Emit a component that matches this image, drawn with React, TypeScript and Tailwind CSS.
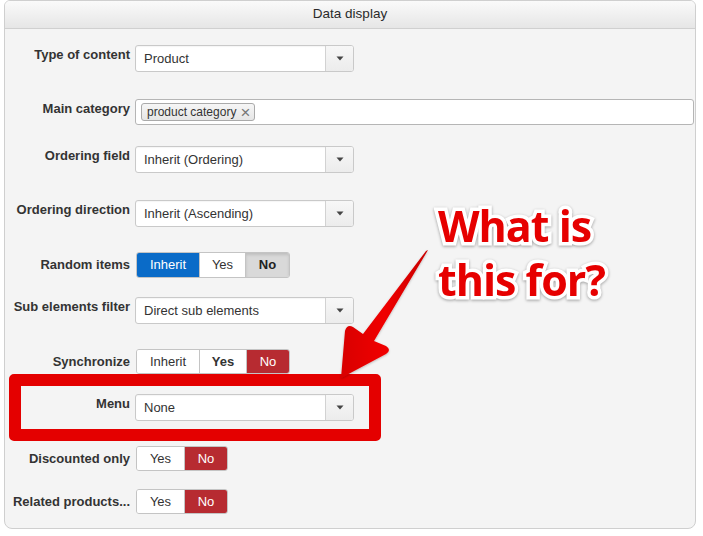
import React from "react";

const font = "font-['Liberation_Sans',Arial,sans-serif]";

function Caret() {
  return (
    <svg width="8" height="5" viewBox="0 0 8 5" className="block">
      <path d="M0.5 0.5 L7.5 0.5 L4 4.5 Z" fill="#444" />
    </svg>
  );
}

function Select({ value }: { value: string }) {
  return (
    <div className="flex h-[27px] w-[219px] rounded-[3px] border border-[#c9c9c9] bg-white overflow-hidden shadow-[inset_0_1px_1px_rgba(0,0,0,0.04)]">
      <div className="flex-1 flex items-center pl-[8px] text-[13px] text-[#333]">{value}</div>
      <div className="w-[28px] flex items-center justify-center border-l border-[#d2d2d2] bg-gradient-to-b from-[#f7f7f7] to-[#ececec]">
        <Caret />
      </div>
    </div>
  );
}

type Btn = { t: string; w: string; kind: "white" | "blue" | "red" | "gray"; bold?: boolean };

function Group({ btns, h }: { btns: Btn[]; h: string }) {
  return (
    <div className={`flex ${h} rounded-[3px] border border-[#c4c4c4] overflow-hidden ml-[1px]`}>
      {btns.map((b, i) => {
        const cls =
          b.kind === "blue"
            ? "bg-[#0a6bc8] text-white"
            : b.kind === "red"
            ? "bg-[#b72b31] text-white"
            : b.kind === "gray"
            ? "bg-[#d9d9d9] text-[#222] shadow-[inset_0_2px_3px_rgba(0,0,0,0.12)]"
            : "bg-white text-[#333]";
        return (
          <div
            key={i}
            className={`${b.w} ${cls} ${b.bold ? "font-bold" : ""} ${i > 0 ? "border-l border-[#c4c4c4]" : ""} flex items-center justify-center text-[13px]`}
          >
            {b.t}
          </div>
        );
      })}
    </div>
  );
}

function Row({ label, mt, children, center }: { label: string; mt: string; children: React.ReactNode; center?: boolean }) {
  return (
    <div className={`flex ${center ? "items-center" : "items-start"} ${mt}`}>
      <div className={`w-[125px] text-right text-[13px] leading-[18px] font-bold text-[#333] whitespace-nowrap ${center ? "" : "pt-[1px]"}`}>{label}</div>
      <div className="ml-[5px]">{children}</div>
    </div>
  );
}

export default function App() {
  return (
    <div className={`${font} relative w-[703px] h-[536px] bg-white overflow-hidden`}>
      <div className="ml-[4px] w-[692px] h-[529px] rounded-b-[8px] rounded-t-[6px] border border-[#cfcfcf] bg-[#f4f4f4] overflow-hidden">
        <div className="h-[28px] border-b border-[#d0d0d0] bg-gradient-to-b from-[#fafafa] to-[#e6e6e6] flex items-center justify-center text-[13.5px] text-[#2a2a2a]">
          Data display
        </div>
        <div className="pt-[16px]">
          <Row label="Type of content" mt="">
            <Select value="Product" />
          </Row>
          <Row label="Main category" mt="mt-[27px]">
            <div className="h-[26px] w-[559px] rounded-[3px] border border-[#b5b5b5] bg-white flex items-center pl-[5px]">
              <div className="h-[18px] flex items-center rounded-[3px] border border-[#aaa] bg-gradient-to-b from-[#f6f6f6] to-[#e6e6e6] pl-[5px] pr-[4px] text-[12px] text-[#333]">
                product category
                <span className="ml-[4px] text-[#777] text-[17px] leading-none">×</span>
              </div>
            </div>
          </Row>
          <Row label="Ordering field" mt="mt-[21px]">
            <Select value="Inherit (Ordering)" />
          </Row>
          <Row label="Ordering direction" mt="mt-[27px]">
            <Select value="Inherit (Ascending)" />
          </Row>
          <Row label="Random items" mt="mt-[25px]" center>
            <Group
              h="h-[26px]"
              btns={[
                { t: "Inherit", w: "w-[62px]", kind: "blue" },
                { t: "Yes", w: "w-[46px]", kind: "white" },
                { t: "No", w: "w-[44px]", kind: "gray", bold: true },
              ]}
            />
          </Row>
          <Row label="Sub elements filter" mt="mt-[19px]">
            <Select value="Direct sub elements" />
          </Row>
          <Row label="Synchronize" mt="mt-[25px]" center>
            <Group
              h="h-[25px]"
              btns={[
                { t: "Inherit", w: "w-[62px]", kind: "white" },
                { t: "Yes", w: "w-[47px]", kind: "white", bold: true },
                { t: "No", w: "w-[43px]", kind: "red" },
              ]}
            />
          </Row>
          <Row label="Menu" mt="mt-[20px]">
            <Select value="None" />
          </Row>
          <Row label="Discounted only" mt="mt-[25px]" center>
            <Group
              h="h-[25px]"
              btns={[
                { t: "Yes", w: "w-[47px]", kind: "white" },
                { t: "No", w: "w-[43px]", kind: "red" },
              ]}
            />
          </Row>
          <Row label="Related products..." mt="mt-[18px]" center>
            <Group
              h="h-[25px]"
              btns={[
                { t: "Yes", w: "w-[47px]", kind: "white" },
                { t: "No", w: "w-[43px]", kind: "red" },
              ]}
            />
          </Row>
        </div>
      </div>

      {/* annotation box */}
      <div className="absolute left-[9px] top-[374px] w-[372px] h-[67px] rounded-[5px] border-[12px] border-[#e40000]" />

      {/* annotation arrow */}
      <svg className="absolute left-0 top-0 pointer-events-none" width="703" height="536" viewBox="0 0 703 536">
        <defs>
          <linearGradient id="ag" x1="0" y1="0" x2="1" y2="0">
            <stop offset="0" stopColor="#d80000" />
            <stop offset="0.5" stopColor="#f00000" />
            <stop offset="1" stopColor="#c80000" />
          </linearGradient>
          <filter id="sh" x="-20%" y="-20%" width="140%" height="140%">
            <feDropShadow dx="0" dy="1" stdDeviation="1" floodColor="#000" floodOpacity="0.25" />
          </filter>
        </defs>
        <path
          d="M428 250 L374 341 L386 346 Q392 350 386 354 L341 378 L345 331 Q347 324 353 327 L363 334 L426 251 Z"
          fill="url(#ag)"
          filter="url(#sh)"
        />
      </svg>

      {/* annotation text */}
      <div className="absolute left-[438px] top-[199px] font-['Open_Sans',sans-serif] font-bold text-[43px] leading-[54px] text-[#e60000] tracking-[-1px] [-webkit-text-stroke:7px_#ffffff] [paint-order:stroke_fill] [filter:drop-shadow(0_1px_1.5px_rgba(0,0,0,0.35))] whitespace-nowrap">
        <div>What is</div>
        <div>this for?</div>
      </div>
    </div>
  );
}
